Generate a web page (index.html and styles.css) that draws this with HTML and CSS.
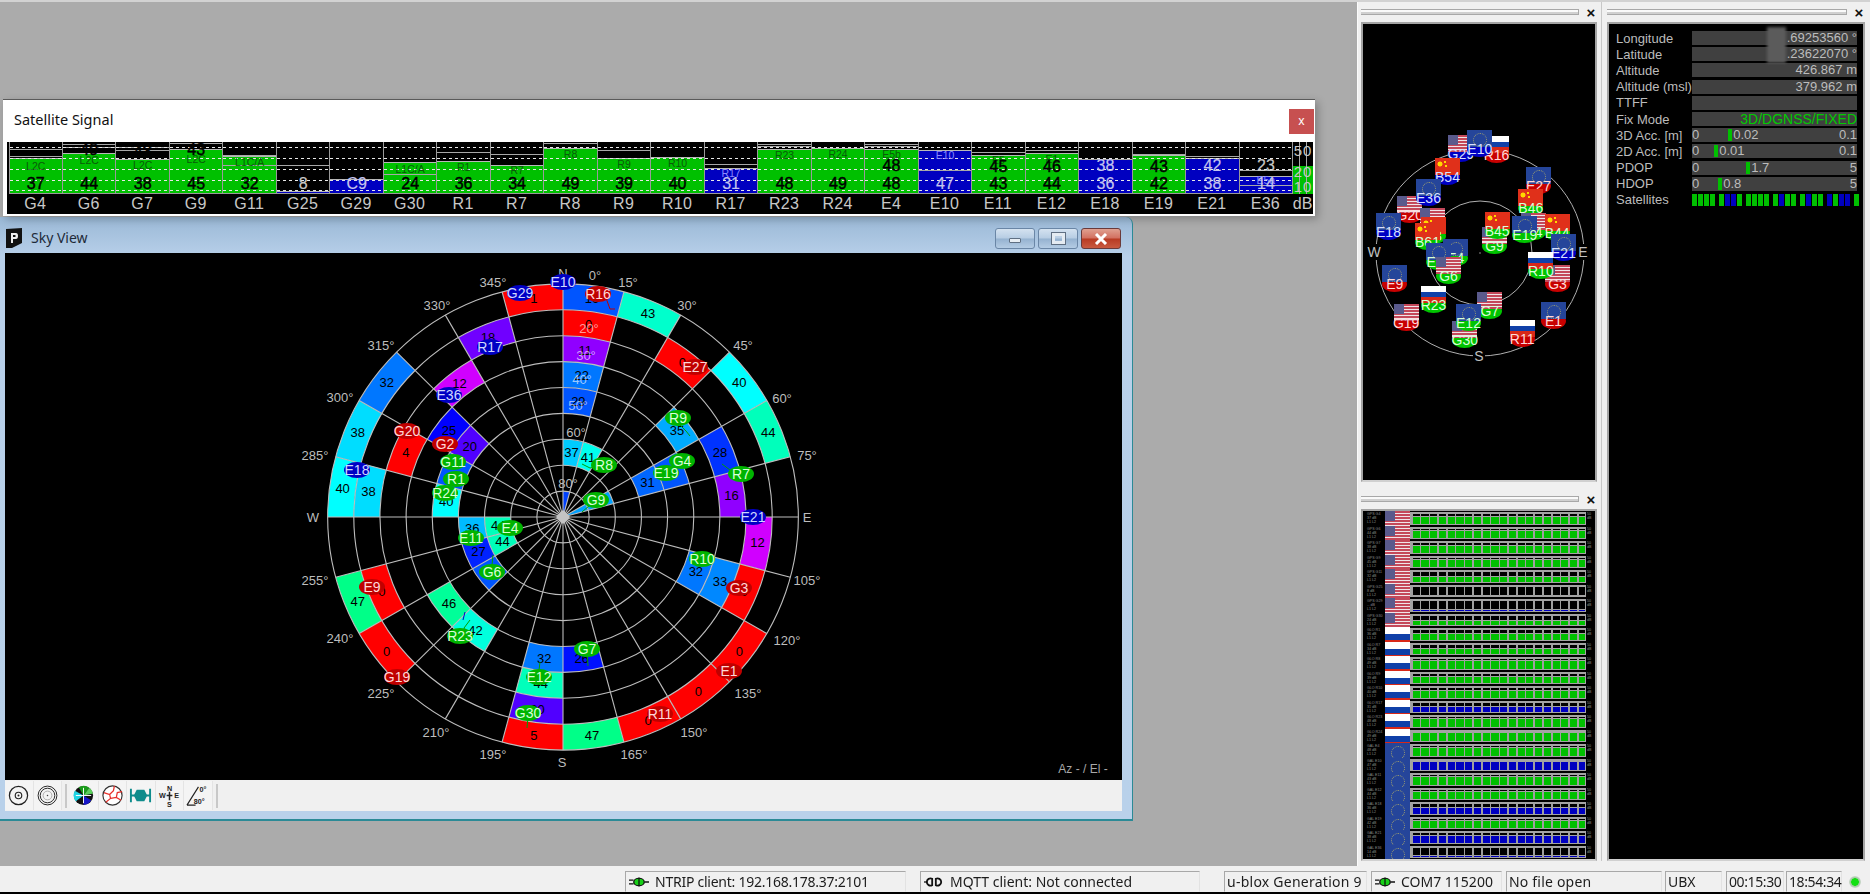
FILE: index.html
```html
<!DOCTYPE html>
<html lang="en">
<head>
<meta charset="utf-8">
<title>u-center</title>
<link rel="stylesheet" href="styles.css">
</head>
<body>
<div class="app">
  <div class="workspace">
    <main class="desktop">
      <section class="win-sky">
        <header class="sky-title">
          <svg class="app-icon" viewBox="0 0 16 20"><path d="M0 1 16 0V15L6 20H0Z" fill="#111"/><path d="M5 5H10Q12 5 12 8T10 11H7V15H5Z" fill="#eee"/><path d="M7 7H9.5V9H7Z" fill="#111"/></svg>
          <span class="sky-name">Sky View</span>
          <span class="ctl"><i class="ctl-min"></i></span>
          <span class="ctl"><i class="ctl-max"></i></span>
          <span class="ctl ctl-close"><svg viewBox="0 0 14 12"><path d="M2 1 12 11M12 1 2 11" stroke="#fff" stroke-width="3"/></svg></span>
        </header>
        <svg class="polar" id="polar" viewBox="0 0 1117 527"></svg>
        <nav class="toolbar">
          <span class="tool"><svg viewBox="0 0 24 24"><circle cx="12" cy="12" r="9.5" fill="none" stroke="#222" stroke-width="1.3"/><circle cx="12" cy="12" r="3.4" fill="none" stroke="#222" stroke-width="1.2"/><circle cx="12" cy="12" r="1" fill="#222"/></svg></span>
          <span class="tool"><svg viewBox="0 0 24 24"><circle cx="12" cy="12" r="9.8" fill="none" stroke="#222"/><circle cx="12" cy="12" r="7.6" fill="none" stroke="#222"/><circle cx="12" cy="12" r="4.6" fill="none" stroke="#aaa"/><circle cx="12" cy="12" r=".8" fill="#444"/></svg></span>
          <span class="tool-sep"></span>
          <span class="tool"><svg viewBox="0 0 24 24"><circle cx="12" cy="12" r="10" fill="#111"/><path d="M12 12 3 7A10 10 0 0 0 4 18Z" fill="#1fd4e4"/><path d="M12 12 7 3.5A10 10 0 0 1 18 4Z" fill="#1a9c1a"/><path d="M12 12 20 17A10 10 0 0 1 12 22Z" fill="#1616c8"/><path d="M12 12 22 10A10 10 0 0 0 18 4Z" fill="#5ad05a"/><path d="M4 12H20M12 4V20" stroke="#fff"/></svg></span>
          <span class="tool"><svg viewBox="0 0 24 24"><circle cx="12" cy="12" r="10" fill="#fff" stroke="#333" stroke-width="1.2"/><path d="M3 9 9 11 13 7 14 2M9 11 10 15 5 19M10 15 16 14 21 17M16 14 17 9 22 8" fill="none" stroke="#e8302a" stroke-width="1.3"/></svg></span>
          <span class="tool"><svg viewBox="0 0 24 24"><path d="M1 5H3V19H1ZM21 5H23V19H21ZM3 11H21V13H3Z" fill="#0f8c8c"/><path d="M8 6H16L19 12 16 18H8L5 12Z" fill="#0f8c8c"/></svg></span>
          <span class="tool"><svg viewBox="0 0 24 24"><path d="M12 8V17M9 12H15" stroke="#222" stroke-width="1.6"/><text class="tool-txt" x="12" y="7" text-anchor="middle">N</text><text class="tool-txt" x="12" y="23.5" text-anchor="middle">S</text><text class="tool-txt" x="1" y="15">W</text><text class="tool-txt" x="17" y="15">E</text></svg></span>
          <span class="tool"><svg viewBox="0 0 24 24"><path d="M1 22 13 3M1 22H10" stroke="#222" stroke-width="1.2" fill="none"/><text class="tool-txt" x="14" y="8">0°</text><text class="tool-txt" x="8" y="21">80°</text></svg></span>
          <span class="tool-sep"></span>
        </nav>
      </section>

      <section class="win-signal">
        <header class="signal-title">
          <span class="signal-name">Satellite Signal</span>
          <span class="signal-close">x</span>
        </header>
        <div class="signal-plot" id="signalPlot"></div>
      </section>
    </main>

    <aside class="dock">
      <div class="dock-col dock-col-a">
        <section class="panel panel-sky">
          <div class="panel-head"><span class="grip"></span><span class="panel-x">×</span></div>
          <div class="panel-body mini-sky" id="miniSky"></div>
        </section>
        <section class="panel panel-bars">
          <div class="panel-head"><span class="grip"></span><span class="panel-x">×</span></div>
          <div class="panel-body mini-bars" id="miniBars"></div>
        </section>
      </div>
      <div class="dock-col dock-col-b">
        <section class="panel panel-data">
          <div class="panel-head"><span class="grip"></span><span class="panel-x">×</span></div>
          <div class="panel-body data-list">
            <div class="redact"></div>
            <div class="d-row"><span class="d-label">Longitude</span><span class="d-val">.69253560 °</span></div>
            <div class="d-row"><span class="d-label">Latitude</span><span class="d-val">.23622070 °</span></div>
            <div class="d-row"><span class="d-label">Altitude</span><span class="d-val">426.867 m</span></div>
            <div class="d-row"><span class="d-label">Altitude (msl)</span><span class="d-val">379.962 m</span></div>
            <div class="d-row"><span class="d-label">TTFF</span><span class="d-val"></span></div>
            <div class="d-row"><span class="d-label">Fix Mode</span><span class="d-val d-fix">3D/DGNSS/FIXED</span></div>
            <div class="d-row"><span class="d-label">3D Acc. [m]</span><span class="d-val d-gauge"><span>0</span><span class="mark m-3d"></span><span>0.02</span><span class="g-max">0.1</span></span></div>
            <div class="d-row"><span class="d-label">2D Acc. [m]</span><span class="d-val d-gauge"><span>0</span><span class="mark m-2d"></span><span>0.01</span><span class="g-max">0.1</span></span></div>
            <div class="d-row"><span class="d-label">PDOP</span><span class="d-val d-gauge"><span>0</span><span class="mark m-pd"></span><span>1.7</span><span class="g-max">5</span></span></div>
            <div class="d-row"><span class="d-label">HDOP</span><span class="d-val d-gauge"><span>0</span><span class="mark m-hd"></span><span>0.8</span><span class="g-max">5</span></span></div>
            <div class="d-row"><span class="d-label">Satellites</span><span class="sat-strip" id="satStrip"></span></div>
          </div>
        </section>
      </div>
    </aside>
  </div>

  <footer class="statusbar">
    <span class="cell c-ntrip"><svg class="plug" viewBox="0 0 22 10"><path d="M0 3H5M0 7H5M17 5H22" stroke="#111" stroke-width="1.4"/><ellipse cx="11" cy="5" rx="6.5" ry="4.8" fill="#111"/><ellipse cx="11" cy="5" rx="5" ry="3.5" fill="#18d018"/><path d="M11 0V10" stroke="#111" stroke-width="1.4"/></svg>NTRIP client: 192.168.178.37:2101</span>
    <span class="cell c-mqtt"><svg class="plug" viewBox="0 0 22 10"><path d="M9 1.5A4 4 0 1 0 9 8.5ZM13 1.5A4 4 0 1 1 13 8.5Z" fill="none" stroke="#111" stroke-width="2"/><path d="M0 5H4" stroke="#111" stroke-width="1.4"/></svg>MQTT client: Not connected</span>
    <span class="cell c-gen">u-blox Generation 9</span>
    <span class="cell c-com"><svg class="plug" viewBox="0 0 22 10"><path d="M0 3H5M0 7H5M17 5H22" stroke="#111" stroke-width="1.4"/><ellipse cx="11" cy="5" rx="6.5" ry="4.8" fill="#111"/><ellipse cx="11" cy="5" rx="5" ry="3.5" fill="#18d018"/><path d="M11 0V10" stroke="#111" stroke-width="1.4"/></svg>COM7 115200</span>
    <span class="cell c-file">No file open</span>
    <span class="cell c-ubx">UBX</span>
    <span class="cell c-up">00:15:30</span>
    <span class="cell c-clock">18:54:34</span>
    <span class="cell c-led"><i class="led"></i></span>
  </footer>
</div>
<script src="app.js"></script>
</body>
</html>
```
FILE: styles.css
```css
* { box-sizing: border-box; }
html, body { margin: 0; width: 1870px; height: 894px; overflow: hidden; }
body { font-family: "Liberation Sans", Arial, sans-serif; background: #ababab; filter: blur(.35px); }
.app { width: 1870px; height: 894px; display: flex; flex-direction: column; border-top: 2px solid #d2d2d2; }
.workspace { flex: 1; display: flex; min-height: 0; }
.desktop { position: relative; flex: 1; background: #ababab; }

/* Sky View window */
.win-sky { position: absolute; left: 0; top: 215px; width: 1133px; height: 604px; display: flex; flex-direction: column; padding: 0 10px 8px 5px; background: linear-gradient(180deg, #9ab8d6 0, #b8d0ea 40px, #b9d1ea 100%); border-right: 1px solid #2b8a96; border-bottom: 2px solid #2b8a96; border-top-right-radius: 7px; }
.sky-title { height: 36px; flex: none; display: flex; align-items: flex-start; padding: 11px 1px 0 1px; gap: 3px; }
.app-icon { width: 16px; height: 20px; margin-right: 6px; flex: none; }
.sky-name { flex: 1; font: 14px/20px "Noto Sans", sans-serif; color: #1e2a38; }
.ctl { width: 40px; height: 21px; border: 1px solid #6a86a6; border-radius: 3px; background: linear-gradient(180deg, #d4e2f0 0, #b7cde3 48%, #95b2d0 52%, #b4cce4 100%); display: flex; align-items: center; justify-content: center; }
.ctl-min { width: 12px; height: 5px; margin-top: 3px; background: #e8eef4; border: 1px solid #5f6f82; border-radius: 1px; }
.ctl-max { width: 13px; height: 11px; border: 3px solid #e4ebf2; outline: 1px solid #5f6f82; }
.ctl-close { background: linear-gradient(180deg, #e0a090 0, #d27060 48%, #b83a22 52%, #c85a40 100%); border-color: #6a3a3a; }
.ctl-close svg { width: 14px; height: 12px; }
.polar { display: block; width: 1117px; height: 527px; background: #000; flex: none; }
.p-grid { fill: none; stroke: #bdbdbd; stroke-width: 1.1; }
.p-hub { fill: #c4c4c4; }
.p-val { font: 13px "Liberation Sans", sans-serif; fill: #000; text-anchor: middle; dominant-baseline: central; }
.p-az { font: 13px "Liberation Sans", sans-serif; fill: #bdbdbd; text-anchor: middle; dominant-baseline: central; }
.p-el { font: 13px "Liberation Sans", sans-serif; fill: #fff; fill-opacity: .62; text-anchor: middle; dominant-baseline: central; }
.p-note { font: 12px "Liberation Sans", sans-serif; fill: #a8a8a8; text-anchor: middle; dominant-baseline: central; }
.p-sat { font: 14px "Liberation Sans", sans-serif; text-anchor: middle; dominant-baseline: central; }
.sat-g ellipse { fill: #00b400; } .sat-g text { fill: #d8ffd8; }
.sat-b ellipse { fill: #0000c4; } .sat-b text { fill: #d0d8ff; }
.sat-r ellipse { fill: #c00000; } .sat-r text { fill: #ffd8d8; }
.toolbar { height: 31px; flex: none; background: #f0f0f0; display: flex; align-items: center; }
.tool { width: 28.5px; height: 29px; display: flex; align-items: center; justify-content: center; background: #f4f4f4; border-right: 1px solid #e4e4e4; }
.tool svg { width: 23px; height: 23px; overflow: visible; }
.tool-txt { font: bold 7.5px "Liberation Sans", sans-serif; fill: #222; }
.tool-sep { width: 2px; height: 24px; background: #c8c8c8; margin: 0 3px 0 3px; }

/* Satellite Signal window */
.win-signal { position: absolute; left: 3px; top: 97px; width: 1312px; height: 117px; background: #fff; border-top: 1px solid #5a5a5a; display: flex; flex-direction: column; box-shadow: 3px 3px 8px rgba(0,0,0,.25); z-index: 2; }
.signal-title { height: 42px; flex: none; display: flex; justify-content: space-between; padding: 9px 1px 0 11px; }
.signal-name { font: 14.5px/20px "Noto Sans", sans-serif; color: #111; }
.signal-close { width: 25px; height: 25px; background: #c75050; color: #fff; font: 12px/24px "Noto Sans", sans-serif; text-align: center; }
.signal-plot { height: 72px; margin: 0 2px 0 4px; padding-left: 1.5px; display: flex; background: #000; flex: none; }
.sig-col { flex: 1; min-width: 0; display: flex; flex-direction: column; }
.sig-area { position: relative; height: 52px; overflow: hidden; border-left: 1px solid #9a9a9a; border-bottom: 1px solid #9a9a9a; }
.sig-area::after { content: ""; position: absolute; inset: 0; background-image: repeating-linear-gradient(90deg, #e8e8e8 0 3px, transparent 3px 6px), repeating-linear-gradient(90deg, #e8e8e8 0 3px, transparent 3px 6px), repeating-linear-gradient(90deg, #e8e8e8 0 3px, transparent 3px 6px), repeating-linear-gradient(90deg, #e8e8e8 0 3px, transparent 3px 6px), repeating-linear-gradient(90deg, #e8e8e8 0 3px, transparent 3px 6px); background-size: 100% 1px; background-repeat: no-repeat; background-position: 0 5px, 0 16px, 0 27px, 0 38px, 0 48px; }
.sig-fill { position: absolute; left: 0; right: 0; bottom: 0; border-top: 1px solid #b8b8b8; }
.fill-g { background: #00c000; } .fill-b { background: #0000c0; }
.sig-line { position: absolute; left: 0; right: 0; height: 1px; background: #a8a8a8; }
.sig-tag { position: absolute; left: 0; right: 0; text-align: center; font: 10.5px/10px "Liberation Sans", sans-serif; color: #0a5a0a; z-index: 1; }
.tag-b { color: #8a8aff; }
.sig-val { position: absolute; left: 0; right: 0; text-align: center; font: 16px/16px "Liberation Sans", sans-serif; color: #000; -webkit-text-stroke: .45px currentColor; z-index: 2; }
.val-b { color: #c4c4ee; -webkit-text-stroke: .2px currentColor; }
.val-k { color: #c8c8c8; -webkit-text-stroke: .2px currentColor; }
.sig-name { height: 20px; text-align: center; font: 16px/19px "Liberation Sans", sans-serif; color: #c8c8c8; white-space: nowrap; letter-spacing: .3px; }
.db-col { width: 21px; flex: none; display: flex; flex-direction: column; }
.db-area { position: relative; height: 52px; overflow: hidden; background: repeating-linear-gradient(90deg, transparent 0 6px, #a8a8a8 6px 7px), linear-gradient(180deg, #000 0 24px, #00c000 24px); border-left: 1px solid #9a9a9a; }
.db-area span { position: absolute; left: 0; right: 0; text-align: center; font: 15px/15px "Liberation Sans", sans-serif; color: #c8c8c8; letter-spacing: 1px; }
.db-a { top: 1px; } .db-b { top: 22px; } .db-c { top: 37px; }
.db-name { height: 20px; font: 16px/19px "Liberation Sans", sans-serif; color: #c8c8c8; text-align: center; white-space: nowrap; }

/* Dock */
.dock { width: 513px; flex: none; display: flex; background: #f0f0f0; border-left: 1px solid #fbfbfb; padding: 0 0 5px 3px; }
.dock-col { display: flex; flex-direction: column; }
.dock-col-a { width: 236px; gap: 7px; }
.dock-col-b { width: 264px; margin-left: 4px; padding-left: 5px; border-left: 1px solid #c8c8c8; }
.panel { display: flex; flex-direction: column; min-height: 0; }
.panel-sky { height: 480px; }
.panel-bars { flex: 1; }
.panel-data { flex: 1; width: 258px; }
.panel-head { height: 20px; flex: none; display: flex; align-items: center; gap: 7px; padding-right: 1px; }
.grip { flex: 1; height: 6px; border-top: 1px solid #a8a8a8; border-bottom: 1px solid #a8a8a8; border-right: 1px solid #a8a8a8; background: linear-gradient(180deg, #fafafa 0 50%, #d0d0d0 50%); }
.panel-x { width: 10px; font: bold 15px/15px "Liberation Sans", sans-serif; color: #111; text-align: center; }
.panel-body { flex: 1; position: relative; background: #000; border: 2px solid #a4a4a4; border-bottom-color: #d0d0d0; overflow: hidden; min-height: 0; }

/* Mini sky flags */
.mini-rings { position: absolute; left: 0; top: 0; width: 231px; height: 456px; }
.mini-ring { fill: none; stroke: #b0b0b0; stroke-width: 1; }
.mini-txt { font: 14px "Liberation Sans", sans-serif; fill: #c0c0c0; text-anchor: middle; dominant-baseline: central; }
.flag { position: absolute; width: 25px; height: 27px; }
.flag-sig { position: absolute; left: 0; bottom: 0; width: 25px; height: 16px; border-radius: 50%; }
.sig-g { background: #00c400; } .sig-b { background: #0000c4; } .sig-r { background: #c80000; }
.art { width: 25px; height: 20px; display: block; flex: none; position: relative; }
.flag .art { position: absolute; left: 0; top: 0; height: 17px; }
.art-us { background: linear-gradient(#5a5a8c, #5a5a8c) 0 0 / 10px 10px no-repeat, repeating-linear-gradient(180deg, #c4485a 0 1.6px, #f0e4e8 1.6px 3.1px); }
.art-ru { background: linear-gradient(180deg, #fff 0 33%, #1040a8 33% 66%, #d82818 66%); }
.art-cn { background: radial-gradient(circle at 5px 6px, #ffd800 2.2px, transparent 2.8px), radial-gradient(circle at 10px 4px, #ffd800 .9px, transparent 1.2px), radial-gradient(circle at 11px 8px, #ffd800 .9px, transparent 1.2px), #e0301a; }
.art-eu { background: #25459a; }
.art-eu::before { content: ""; position: absolute; left: 6px; top: 3px; width: 12px; height: 12px; border: 1px dotted #a0a070; border-radius: 50%; }
.flag-lab { position: absolute; left: -4px; right: -4px; top: 12px; text-align: center; font: 14px/14px "Liberation Sans", sans-serif; color: #d8e0ff; white-space: nowrap; }
.lab-g { color: #d8ffd8; } .lab-r { color: #ffd8d8; }

/* Mini bars */
.mini-bars { display: flex; flex-direction: column; padding: 0 0 0 1px; }
.m-row { flex: 1; min-height: 0; display: flex; overflow: hidden; }
.m-info { width: 21px; flex: none; padding: 1px 0 0 3px; font: 3.6px/4.2px "Liberation Sans", sans-serif; color: #8c8c8c; white-space: nowrap; }
.m-art { width: 25px; flex: none; overflow: hidden; }
.m-track { position: relative; flex: none; width: 176px; margin: 1px 0 1px; background: #000; border: 1px solid #a4a4a4; border-width: 2px 1px 1px; overflow: hidden; }
.m-fill { position: absolute; left: 0; right: 0; bottom: 0; border-top: 1px solid #a4a4a4; }
.m-track::after { content: ""; position: absolute; inset: 0; background: repeating-linear-gradient(90deg, #a0a0a0 0 1.6px, transparent 1.6px 8.75px); }
.m-end { width: 8px; flex: none; padding: 1px 0 0 1px; font: 3.6px/4.2px "Liberation Sans", sans-serif; color: #8c8c8c; }

/* Data list */
.data-list { padding: 6px 0 0 7px; }
.d-row { display: flex; height: 16.2px; align-items: center; }
.d-label { width: 76px; flex: none; font-size: 13px; color: #bcbcbc; white-space: nowrap; }
.d-val { width: 165px; height: 14px; flex: none; background: #404040; font-size: 13px; line-height: 14px; color: #bcbcbc; text-align: right; }
.d-fix { color: #00cc00; font-size: 14px; }
.d-gauge { display: flex; text-align: left; align-items: center; }
.g-max { margin-left: auto; }
.mark { width: 4px; height: 12px; background: #00c000; margin-right: 1px; }
.m-3d { margin-left: 29px; } .m-2d { margin-left: 15px; } .m-pd { margin-left: 47px; } .m-hd { margin-left: 19px; }
.sat-strip { display: flex; align-items: center; height: 12px; gap: 1px; }
.sat-seg { width: 5px; height: 12px; }
.sat-gap { margin-right: 3px; }
.redact { position: absolute; left: 158px; top: 3px; width: 19px; height: 36px; background: #5b5b5b; filter: blur(1.5px); z-index: 1; }

/* Status bar */
.statusbar { height: 28px; flex: none; background: #f0f0f0; border-bottom: 2px solid #000; display: flex; align-items: flex-end; padding-left: 625px; font: 14px/20px "Noto Sans", sans-serif; color: #1c1c1c; }
.cell { height: 21px; border: 1px solid; border-color: #a8a8a8 #e2e2e2 #f0f0f0 #a8a8a8; padding-left: 2px; display: flex; align-items: center; white-space: nowrap; flex: none; }
.plug { width: 20px; height: 10px; margin-right: 6px; margin-left: 1px; flex: none; }
.c-ntrip { width: 281px; margin-right: 14px; letter-spacing: -.25px; }
.c-mqtt { width: 280px; margin-right: 24px; }
.c-gen { width: 143px; margin-right: 4px; letter-spacing: .25px; }
.c-com { width: 131px; margin-right: 4px; }
.c-file { width: 156px; margin-right: 3px; letter-spacing: .2px; }
.c-ubx { width: 57px; margin-right: 4px; }
.c-up { width: 58px; margin-right: 2px; letter-spacing: -.4px; }
.c-clock { width: 56px; margin-right: 3px; letter-spacing: -.4px; }
.c-led { width: 25px; border-color: #f0f0f0; padding-left: 3px; }
.led { width: 12px; height: 12px; border-radius: 50%; background: radial-gradient(circle, #12e012 0 3.5px, #9ac89a 4px, #cfd8cf 6px); display: block; }
```
FILE: app.js
```javascript
(function () {
  var NS = "http://www.w3.org/2000/svg";
  function el(tag, cls, parent, text) {
    var e = document.createElement(tag);
    if (cls) e.className = cls;
    if (text !== undefined) e.textContent = text;
    if (parent) parent.appendChild(e);
    return e;
  }
  function sv(tag, attrs, parent, text) {
    var e = document.createElementNS(NS, tag);
    for (var k in attrs) e.setAttribute(k, attrs[k]);
    if (text !== undefined) e.textContent = text;
    if (parent) parent.appendChild(e);
    return e;
  }

  /* ---------- polar sky plot ---------- */
  var svg = document.getElementById("polar");
  var CX = 558, CY = 264, UX = 26.15, UY = 25.9;
  var ORG_X = 5, ORG_Y = 253;
  function pt(az, k) {
    var a = az * Math.PI / 180;
    return [CX + k * UX * Math.sin(a), CY - k * UY * Math.cos(a)];
  }
  function hue(v) {
    var stops = [[10, 300], [12, 289], [25, 240], [40, 180], [50, 140]];
    for (var i = 1; i < stops.length; i++) {
      if (v <= stops[i][0]) {
        var a = stops[i - 1], b = stops[i];
        return a[1] + (b[1] - a[1]) * (v - a[0]) / (b[0] - a[0]);
      }
    }
    return 140;
  }
  function colour(v) { return v < 10 ? "#ff0000" : "hsl(" + hue(v) + ",100%,50%)"; }
  /* az start, elevation bucket, value, hide value text, shade override */
  var cells = [
    [345, 0, 1], [0, 0, 16, 0, 30], [15, 0, 43], [45, 0, 40], [60, 0, 44], [300, 0, 32], [285, 0, 38], [270, 0, 40],
    [270, 10, 38], [30, 10, 0], [0, 10, 0], [330, 10, 18], [90, 10, 12], [105, 10, 0],
    [0, 20, 11, 0, 16], [315, 20, 12], [285, 20, 4], [60, 20, 28], [75, 20, 16], [105, 20, 33],
    [0, 30, 22, 0, 32], [300, 30, 25], [45, 30, 35], [105, 30, 32], [180, 30, 32], [165, 30, 26], [225, 30, 46], [210, 30, 42],
    [0, 40, 29, 0, 30], [300, 40, 20], [285, 40, 30, 1], [270, 40, 40], [60, 40, 30, 1],
    [60, 50, 31], [255, 50, 36], [240, 50, 27], [225, 50, 30, 1],
    [0, 60, 37], [15, 60, 41], [255, 60, 44], [240, 60, 44],
    [120, 0, 0], [135, 0, 0], [150, 0, 0], [165, 0, 47], [180, 0, 5],
    [180, 10, 20], [180, 20, 44], [225, 0, 0], [240, 0, 47], [240, 10, 0]
  ];
  function ring(k1, k2, a1, a2) {
    var p1 = pt(a1, k1), p2 = pt(a2, k1), p3 = pt(a2, k2), p4 = pt(a1, k2);
    return "M" + p1 + "A" + k1 * UX + " " + k1 * UY + " 0 0 1 " + p2 + "L" + p3 +
      (k2 > 0 ? "A" + k2 * UX + " " + k2 * UY + " 0 0 0 " + p4 : "") + "Z";
  }
  cells.forEach(function (c) {
    var k = (90 - c[1]) / 10;
    var shade = c.length > 4 ? c[4] : c[2];
    sv("path", { d: ring(k, k - 1, c[0], c[0] + 15), fill: colour(shade) }, svg);
  });
  sv("path", { d: ring(1, 0, 0, 15), fill: "#0040ff" }, svg);
  sv("path", { d: ring(2, 0, 60, 75), fill: "#00a0ff" }, svg);
  for (var k = 1; k <= 9; k++) sv("ellipse", { "class": "p-grid", cx: CX, cy: CY, rx: k * UX, ry: k * UY }, svg);
  for (var a = 0; a < 360; a += 15) {
    var e = pt(a, 9);
    sv("line", { "class": "p-grid", x1: CX, y1: CY, x2: e[0], y2: e[1] }, svg);
  }
  sv("path", { "class": "p-hub", d: "M" + CX + " " + (CY - 7) + "L" + (CX + 7) + " " + CY + "L" + CX + " " + (CY + 7) + "L" + (CX - 7) + " " + CY + "Z" }, svg);
  cells.forEach(function (c) {
    if (c[3]) return;
    var k = (90 - c[1]) / 10 - 0.5;
    var p = pt(c[0] + 7.5, k);
    sv("text", { "class": "p-val", x: p[0], y: p[1] }, svg, c[2]);
  });
  var azLabels = [["0°", 595, 275], ["15°", 628, 282], ["30°", 687, 305], ["45°", 743, 345], ["60°", 782, 398], ["75°", 807, 455],
    ["105°", 807, 580], ["120°", 787, 640], ["135°", 748, 693], ["150°", 694, 732], ["165°", 634, 754], ["195°", 493, 754],
    ["210°", 436, 732], ["225°", 381, 693], ["240°", 340, 638], ["255°", 315, 580], ["285°", 315, 455], ["300°", 340, 397],
    ["315°", 381, 345], ["330°", 437, 305], ["345°", 493, 282], ["N", 563, 273], ["S", 562, 762], ["W", 313, 517], ["E", 807, 517]];
  azLabels.forEach(function (l) { sv("text", { "class": "p-az", x: l[1] - ORG_X, y: l[2] - ORG_Y }, svg, l[0]); });
  [["20°", 589, 328], ["30°", 586, 355], ["40°", 582, 379], ["50°", 578, 405]].forEach(function (l) {
    sv("text", { "class": "p-el", x: l[1] - ORG_X, y: l[2] - ORG_Y }, svg, l[0]);
  });
  [["60°", 576, 432], ["80°", 568, 483]].forEach(function (l) {
    sv("text", { "class": "p-az", x: l[1] - ORG_X, y: l[2] - ORG_Y }, svg, l[0]);
  });
  sv("text", { "class": "p-note", x: 1078, y: 516 }, svg, "Az - / El -");
  [["#c00000", "593,292 606,298 610,309 615,309"], ["#00a000", "680,425 686,431 690,436"], ["#00a000", "470,620 464,628 466,634 460,640"],
   ["#00a000", "740,475 730,470 722,464"], ["#0000c0", "465,612 463,620"], ["#00a000", "528,716 527,728"], ["#00a000", "587,650 588,666"],
   ["#00a000", "539,670 540,662"], ["#00a000", "492,565 493,555"], ["#00a000", "604,465 590,468 582,464"], ["#00a000", "596,500 582,512"]
  ].forEach(function (t) {
    sv("polyline", { points: t[1].split(" ").map(function (s) { var q = s.split(","); return (q[0] - ORG_X) + "," + (q[1] - ORG_Y); }).join(" "), fill: "none", stroke: t[0] }, svg);
  });
  var sats = [["E10", 563, 282, "b"], ["G29", 520, 293, "b"], ["R16", 598, 294, "r"], ["R17", 490, 347, "b"], ["E27", 695, 367, "r"],
    ["E36", 449, 395, "b"], ["R9", 678, 418, "g"], ["G20", 407, 431, "r"], ["G2", 445, 444, "r"], ["G11", 453, 462, "g"], ["G4", 682, 461, "g"],
    ["R8", 604, 465, "g"], ["E18", 357, 470, "b"], ["E19", 666, 473, "g"], ["R7", 741, 474, "g"], ["R1", 456, 479, "g"], ["R24", 445, 493, "g"],
    ["G9", 596, 500, "g"], ["E21", 753, 517, "b"], ["E4", 510, 528, "g"], ["E11", 471, 538, "g"], ["G6", 492, 572, "g"], ["R10", 702, 559, "g"],
    ["G3", 739, 588, "r"], ["E9", 372, 587, "r"], ["R23", 460, 636, "g"], ["G7", 587, 649, "g"], ["E12", 539, 677, "g"], ["G19", 397, 677, "r"],
    ["E1", 729, 671, "r"], ["G30", 528, 713, "g"], ["R11", 660, 714, "r"]];
  sats.forEach(function (s) {
    var g = sv("g", { "class": "sat-" + s[3] }, svg);
    sv("ellipse", { cx: s[1] - ORG_X, cy: s[2] - ORG_Y, rx: 13, ry: 8 }, g);
    sv("text", { "class": "p-sat", x: s[1] - ORG_X, y: s[2] - ORG_Y }, g, s[0]);
  });

  /* ---------- signal chart ---------- */
  /* name, value, second value, second py, fill top py, colour, tag, tag py, line pys */
  var sig = [
    ["G4", 37, null, 0, 205, "g", "L2C", 228, [175, 198]],
    ["G6", 44, 49, 180, 190, "g", "L2C", 208, [160, 170]],
    ["G7", 38, 43, 185, 208, "g", "L2C", 225, [170, 180]],
    ["G9", 45, 43, 180, 178, "g", "L2C", 205, [158]],
    ["G11", 32, null, 0, 200, "g", "L1C/A", 215, [193, 225]],
    ["G25", 8, null, 0, 305, "b", "", 0, [225]],
    ["G29", null, "C9", 282, 267, "b", "", 0, []],
    ["G30", 24, null, 0, 218, "g", "L1C/A", 235, [250]],
    ["R1", 36, null, 0, 215, "g", "R1", 230, [185]],
    ["R7", 34, null, 0, 225, "g", "R7", 238, [190]],
    ["R8", 49, null, 0, 175, "g", "R8", 190, [158]],
    ["R9", 39, null, 0, 205, "g", "R9", 222, [180]],
    ["R10", 40, null, 0, 203, "g", "R10", 218, []],
    ["R17", 31, null, 0, 235, "b", "R17", 248, [222]],
    ["R23", 48, null, 0, 178, "g", "R23", 193, [160, 168]],
    ["R24", 49, null, 0, 175, "g", "R24", 190, []],
    ["E4", 48, 48, 228, 178, "g", "E5b", 192, [160, 168]],
    ["E10", 47, null, 0, 180, "b", "E10", 193, [240]],
    ["E11", 43, 45, 230, 195, "g", "E5", 210, [185]],
    ["E12", 44, 46, 230, 190, "g", "E1", 205, [180]],
    ["E18", 36, 38, 228, 208, "b", "", 0, [205]],
    ["E19", 42, 43, 230, 197, "g", "", 0, [190]],
    ["E21", 38, 42, 228, 205, "b", "", 0, [197]],
    ["E36", 14, 23, 228, 258, "b", "E5a", 270, [240, 285]]
  ];
  var TOP = 155;
  var plot = document.getElementById("signalPlot");
  sig.forEach(function (s) {
    var col = el("div", "sig-col", plot);
    var area = el("div", "sig-area", col);
    var fill = el("div", "sig-fill fill-" + s[5], area);
    fill.style.height = ((310 - s[4]) / 3) + "px";
    s[8].forEach(function (py) {
      var l = el("div", "sig-line", area);
      l.style.top = ((py - TOP) / 3) + "px";
    });
    if (s[6]) {
      var t = el("div", "sig-tag" + (s[5] === "b" ? " tag-b" : ""), area, s[6]);
      t.style.top = ((s[7] - TOP) / 3 - 5) + "px";
    }
    var lightBar = s[5] === "b" ? " val-b" : "";
    if (s[0] === "G25") lightBar = " val-k";
    if (s[2] !== null) {
      var v2 = el("div", "sig-val" + (s[0] === "E36" ? " val-k" : lightBar), area, s[2]);
      v2.style.top = ((s[3] - TOP) / 3 - 8) + "px";
    }
    if (s[1] !== null) {
      var v1 = el("div", "sig-val" + lightBar, area, s[1]);
      v1.style.top = ((282 - TOP) / 3 - 8) + "px";
    }
    el("div", "sig-name", col, s[0]);
  });
  var db = el("div", "db-col", plot);
  var dbArea = el("div", "db-area", db);
  el("span", "db-a", dbArea, "50");
  el("span", "db-b", dbArea, "20");
  el("span", "db-c", dbArea, "10");
  el("div", "db-name", db, "dB");

  /* ---------- mini sky ---------- */
  var mini = document.getElementById("miniSky");
  var ringSvg = document.createElementNS(NS, "svg");
  ringSvg.setAttribute("class", "mini-rings");
  ringSvg.setAttribute("viewBox", "0 0 231 456");
  mini.appendChild(ringSvg);
  var RX0 = 117, RY0 = 229;
  sv("ellipse", { "class": "mini-ring", cx: RX0, cy: RY0, rx: 104, ry: 103 }, ringSvg);
  sv("ellipse", { "class": "mini-ring", cx: RX0, cy: RY0, rx: 52, ry: 52 }, ringSvg);
  sv("circle", { cx: RX0, cy: RY0, r: .7, fill: "#bbb" }, ringSvg);
  [["W", 11, 228], ["E", 220, 228], ["S", 116, 332]].forEach(function (t) {
    sv("rect", { x: t[1] - 6, y: t[2] - 8, width: 12, height: 16, fill: "#000" }, ringSvg);
    sv("text", { "class": "mini-txt", x: t[1], y: t[2] }, ringSvg, t[0]);
  });
  var flags = [
    ["us", "b", "G29", 265, 15], ["ru", "r", "R16", 372, 18], ["eu", "b", "E10", 322, 0], ["cn", "b", "B54", 225, 85],
    ["eu", "r", "E27", 498, 110], ["us", "r", "G20", 112, 197], ["eu", "b", "E36", 168, 148], ["us", "r", "G2", 180, 235],
    ["cn", "g", "B3", 182, 260], ["cn", "g", "B61", 165, 280], ["eu", "b", "E18", 48, 249], ["cn", "g", "B46", 475, 178],
    ["us", "g", "G9", 366, 290], ["cn", "g", "B45", 374, 245], ["us", "g", "G4", 482, 250], ["eu", "g", "E19", 457, 257],
    ["cn", "g", "B44", 554, 252], ["eu", "b", "E21", 573, 312], ["eu", "g", "E4", 250, 327], ["eu", "g", "E11", 198, 340],
    ["us", "g", "G6", 228, 380], ["us", "r", "G3", 555, 405], ["ru", "g", "R10", 505, 367], ["eu", "r", "E9", 67, 404],
    ["ru", "g", "R23", 183, 467], ["us", "g", "G7", 352, 487], ["us", "r", "G19", 101, 523], ["us", "g", "G30", 277, 572],
    ["eu", "g", "E12", 288, 523], ["eu", "r", "E1", 543, 516], ["ru", "r", "R11", 449, 571]
  ];
  flags.forEach(function (f) {
    var d = el("div", "flag", mini);
    d.style.left = (f[3] / 3 - 3) + "px";
    d.style.top = (106 + f[4] / 3) + "px";
    el("span", "flag-sig sig-" + f[1], d);
    el("span", "art art-" + f[0], d);
    el("span", "flag-lab lab-" + f[1], d, f[2]);
  });

  /* ---------- mini bars ---------- */
  var bars = document.getElementById("miniBars");
  var fillPct = [75, 85, 75, 85, 62, 0, 15, 50, 70, 65, 92, 75, 80, 60, 90, 92, 90, 90, 85, 85, 70, 85, 75, 20];
  sig.forEach(function (s, i) {
    var row = el("div", "m-row", bars);
    var sys = s[0][0] === "G" ? "GPS" : s[0][0] === "R" ? "GLO" : "GAL";
    var info = el("div", "m-info", row);
    el("div", "", info, sys + " " + s[0]);
    el("div", "", info, (s[1] === null ? "--" : s[1]) + " dB");
    el("div", "", info, "L1 L2");
    var art = el("div", "m-art", row);
    el("span", "art art-" + (s[0][0] === "G" ? "us" : s[0][0] === "R" ? "ru" : "eu"), art);
    var track = el("div", "m-track", row);
    var f = el("div", "m-fill fill-" + s[5], track);
    f.style.height = fillPct[i] + "%";
    var end = el("div", "m-end", row);
    el("div", "", end, "50");
    el("div", "", end, "dB");
  });

  /* ---------- satellites strip ---------- */
  var strip = document.getElementById("satStrip");
  "gggg|gbbg|gggg|gbgg|gbgg|bgbb|g".split("|").forEach(function (group) {
    group.split("").forEach(function (c, i) {
      el("span", "sat-seg fill-" + c + (i === group.length - 1 ? " sat-gap" : ""), strip);
    });
  });
})();
```
